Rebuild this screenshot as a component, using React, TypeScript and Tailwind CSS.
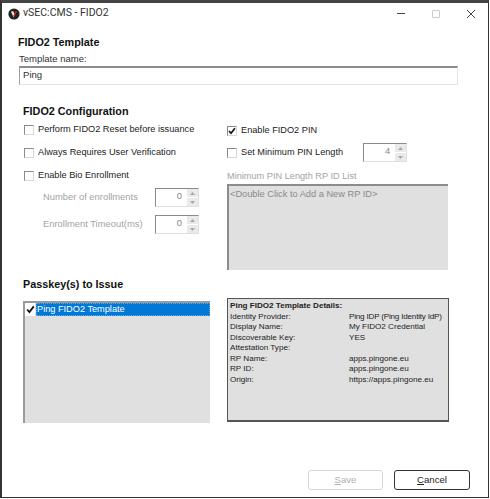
import React from "react";

const font = { fontFamily: '"Liberation Sans", Arial, sans-serif' };

function Check({ checked = false }: { checked?: boolean }) {
  return (
    <span className="flex h-[10px] w-[10px] shrink-0 items-center justify-center border border-t-[#8a8a8a] border-l-[#8a8a8a] border-r-[#d8d8d8] border-b-[#d8d8d8] bg-white">
      {checked && (
        <svg width="8" height="8" viewBox="0 0 8 8">
          <path d="M1 4 L3 6.2 L7 1.2" fill="none" stroke="#111" strokeWidth="1.7" />
        </svg>
      )}
    </span>
  );
}

function CheckRow({ label, checked, className = "" }: { label: string; checked?: boolean; className?: string }) {
  return (
    <div className={`flex h-[14px] items-center gap-[4px] ${className}`}>
      <Check checked={checked} />
      <span className="whitespace-nowrap text-[9.2px] leading-none text-[#222]">{label}</span>
    </div>
  );
}

function Spin({ value }: { value: string }) {
  return (
    <div className="flex h-[19px] w-[44px] border border-t-[#8a8a8a] border-l-[#8a8a8a] border-r-[#e0e0e0] border-b-[#e0e0e0] bg-white">
      <span className="flex-1 pr-[5px] pt-[1px] text-right text-[9.4px] leading-[12px] text-[#888]">{value}</span>
      <div className="flex w-[11px] flex-col gap-px bg-white">
        <span className="flex flex-1 items-center justify-center bg-[#eaeaea]">
          <svg width="5" height="3" viewBox="0 0 5 3"><path d="M2.5 0 L5 3 H0Z" fill="#a8a8a8" /></svg>
        </span>
        <span className="flex flex-1 items-center justify-center bg-[#eaeaea]">
          <svg width="5" height="3" viewBox="0 0 5 3"><path d="M0 0 H5 L2.5 3Z" fill="#a8a8a8" /></svg>
        </span>
      </div>
    </div>
  );
}

const details: [string, string][] = [
  ["Identity Provider:", "Ping IDP (Ping Identity IdP)"],
  ["Display Name:", "My FIDO2 Credential"],
  ["Discoverable Key:", "YES"],
  ["Attestation Type:", ""],
  ["RP Name:", "apps.pingone.eu"],
  ["RP ID:", "apps.pingone.eu"],
  ["Origin:", "https://apps.pingone.eu"],
];

export default function App() {
  return (
    <div className="h-[499px] w-[490px] bg-white pb-px pr-px">
      <div style={font} className="flex h-full w-full flex-col border-2 border-b border-r border-t-[3px] border-[#333] border-t-[#444] bg-white">
        {/* title bar */}
        <div className="flex h-[21px] shrink-0 items-center pl-[6px]">
          <svg width="12" height="12" viewBox="0 0 12 12" className="shrink-0">
            <circle cx="6" cy="6" r="5.6" fill="#222" />
            <path d="M3 3.4 L5.6 9.4 L6.8 6.6 L5.2 3.2Z" fill="#f2f2f2" />
            <path d="M5.6 9.4 L9.4 3 L7.4 3.4 L5.4 7.4Z" fill="#d8262c" />
          </svg>
          <span className="ml-[3px] font-['Roboto'] text-[10.5px] leading-none text-[#333]">vSEC:CMS - FIDO2</span>
          <div className="ml-auto flex items-center pr-[12px]">
            <span className="h-px w-[8px] bg-[#444]" />
            <span className="ml-[27px] h-[8px] w-[8px] rounded-[1px] border border-[#ccc]" />
            <svg width="10" height="10" viewBox="0 0 10 10" className="ml-[26px]">
              <path d="M1 1 L9 9 M9 1 L1 9" stroke="#444" strokeWidth="1" fill="none" />
            </svg>
          </div>
        </div>

        <div className="flex flex-1 flex-col pl-[16px]">
          <h1 className="mt-[11px] text-[10.8px] font-bold leading-[14px] text-[#111]">FIDO2 Template</h1>
          <div className="ml-px mt-[4px] text-[9.5px] leading-[12px] text-[#333]">Template name:</div>
          <div className="ml-px mt-px h-[19px] w-[439px] border border-t-2 border-[#e4e4e4] border-t-[#8c8c8c] border-l-[#a0a0a0] px-[3px] text-[9.6px] leading-[14px] text-[#333]">
            Ping
          </div>

          <h2 className="ml-[5px] mt-[19px] text-[10.8px] font-bold leading-[14px] text-[#111]">FIDO2 Configuration</h2>

          <div className="ml-[6px] mt-px flex">
            {/* left */}
            <div className="flex w-[203px] flex-col">
              <CheckRow label="Perform FIDO2 Reset before issuance" className="mt-[4px]" />
              <CheckRow label="Always Requires User Verification" className="mt-[9px]" />
              <CheckRow label="Enable Bio Enrollment" className="mt-[9px]" />
              <div className="mt-[5px] flex items-center justify-between pl-[19px] pr-[28px]">
                <span className="text-[9.4px] text-[#a3a3a3]">Number of enrollments</span>
                <Spin value="0" />
              </div>
              <div className="mt-[8px] flex items-center justify-between pl-[19px] pr-[28px]">
                <span className="text-[9.4px] text-[#a3a3a3]">Enrollment Timeout(ms)</span>
                <Spin value="0" />
              </div>
            </div>
            {/* right */}
            <div className="flex flex-col">
              <CheckRow label="Enable FIDO2 PIN" checked className="mt-[5px]" />
              <div className="mt-[5px] flex h-[19px] items-center">
                <CheckRow label="Set Minimum PIN Length" />
                <div className="ml-[20px]"><Spin value="4" /></div>
              </div>
              <div className="mt-[8px] text-[9.2px] leading-[12px] text-[#a3a3a3]">Minimum PIN Length RP ID List</div>
              <div className="mt-[2px] h-[86px] w-[221px] border-2 border-b-0 border-r-0 border-t-[#8c8c8c] border-l-[#8c8c8c] bg-[#e0e0e0] px-px pt-px text-[9.25px] leading-[14px] text-[#8a8a8a]">
                {"<Double Click to Add a New RP ID>"}
              </div>
            </div>
          </div>

          <div className="ml-[5px] mt-[5px] flex items-start">
            <div className="flex w-[204px] flex-col">
              <h2 className="mt-[2px] text-[10.8px] font-bold leading-[14px] text-[#111]">Passkey(s) to Issue</h2>
              <div className="mt-[10px] h-[122px] w-[187px] border-2 border-b-0 border-r-0 border-[#9a9a9a] bg-[#e0e0e0]">
                <div className="flex h-[13px] items-center">
                  <span className="flex h-[13px] w-[10px] shrink-0 items-center justify-center bg-white">
                    <svg width="9" height="9" viewBox="0 0 9 9">
                      <path d="M1.2 4.5 L3.4 7 L7.8 1.4" fill="none" stroke="#111" strokeWidth="1.8" />
                    </svg>
                  </span>
                  <span className="ml-px flex h-[13px] flex-1 items-center whitespace-nowrap border border-dotted border-[#6aa9dd] bg-[#0078d7] text-[9.2px] leading-none text-white">
                    Ping FIDO2 Template
                  </span>
                </div>
              </div>
            </div>
            <div className="mt-[23px] h-[124px] w-[222px] border border-b-2 border-[#555] bg-[#e0e0e0] pl-[2px] pt-[2px] text-[8.1px] leading-[10.5px] text-[#222]">
              <div className="font-bold">Ping FIDO2 Template Details:</div>
              {details.map(([k, v]) => (
                <div key={k} className="flex h-[10.5px] whitespace-nowrap">
                  <span className="w-[119px] shrink-0">{k}</span>
                  <span className={v.startsWith("Ping") ? "tracking-[-0.2px]" : ""}>{v}</span>
                </div>
              ))}
            </div>
          </div>

          <div className="mb-[7px] mt-auto flex justify-end gap-[11px] pr-[18px]">
            <button className="h-[20px] w-[75px] rounded-[3px] border border-[#d8d8d8] bg-white text-[9.6px] text-[#b0b0b0]">
              <span className="underline">S</span>ave
            </button>
            <button className="h-[20px] w-[76px] rounded-[3px] border border-[#333] bg-white text-[9.6px] text-[#222]">
              <span className="underline">C</span>ancel
            </button>
          </div>
        </div>
      </div>
    </div>
  );
}
